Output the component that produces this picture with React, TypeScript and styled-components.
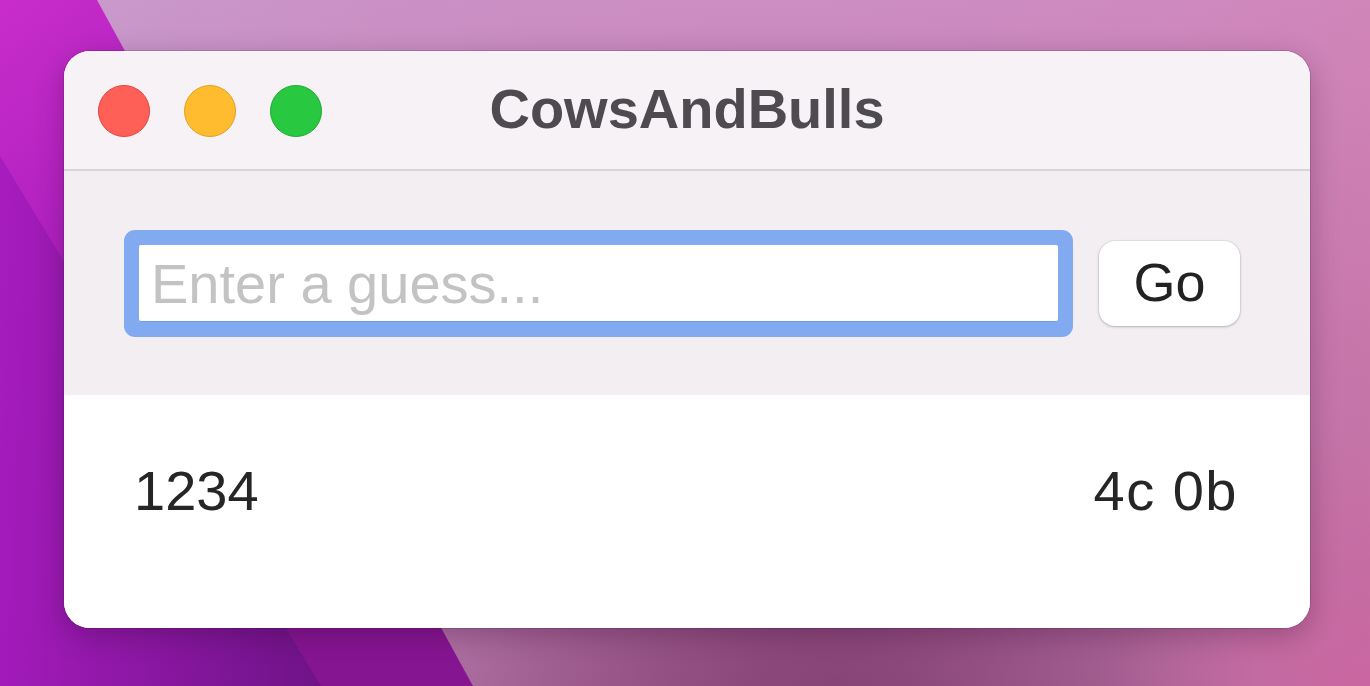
import React from "react";
import styled, { createGlobalStyle } from "styled-components";

const GlobalStyle = createGlobalStyle`
  html, body {
    margin: 0;
    padding: 0;
    width: 100%;
    height: 100%;
    overflow: hidden;
    font-family: "Liberation Sans", Arial, sans-serif;
  }
  #root { width: 100%; height: 100%; }
`;

const Desktop = styled.div`
  width: 100vw;
  height: 100vh;
  display: grid;
  grid-template: 1fr / 1fr;
`;

const Wallpaper = styled.svg`
  grid-area: 1 / 1;
  width: 100%;
  height: 100%;
  display: block;
`;

const WindowLayer = styled.div`
  grid-area: 1 / 1;
  padding: 51px 60px 58px 64px;
  display: flex;
`;

const Window = styled.div`
  flex: 1;
  display: flex;
  flex-direction: column;
  border-radius: 26px;
  overflow: hidden;
  background: #ffffff;
  box-shadow: 0 0 0 1px rgba(60, 20, 60, 0.18), 0 8px 28px rgba(40, 0, 40, 0.28);
`;

const TitleBar = styled.div`
  height: 120px;
  flex: none;
  display: grid;
  grid-template-columns: 1fr auto 1fr;
  align-items: center;
  background: #f6f2f6;
  border-bottom: 2px solid #d9d5d9;
  padding-bottom: 2px;
  box-sizing: border-box;
`;

const Lights = styled.div`
  display: flex;
  gap: 34px;
  padding-left: 34px;
  padding-top: 3px;
`;

const Light = styled.span<{ $fill: string; $edge: string }>`
  width: 52px;
  height: 52px;
  border-radius: 50%;
  box-sizing: border-box;
  background: ${(p) => p.$fill};
  border: 1px solid ${(p) => p.$edge};
`;

const Title = styled.div`
  font-size: 56px;
  line-height: 64px;
  font-weight: 700;
  color: #4d4b4f;
`;

const Toolbar = styled.div`
  height: 224px;
  flex: none;
  display: flex;
  align-items: center;
  gap: 26px;
  padding: 0 70px 0 60px;
  background: #f2eef2;
`;

const FocusRing = styled.div`
  flex: 1;
  display: flex;
  padding: 15px;
  border-radius: 11px;
  background: #81aaf1;
`;

const GuessInput = styled.input`
  flex: 1;
  min-width: 0;
  height: 77px;
  box-sizing: border-box;
  border: none;
  outline: none;
  border-radius: 2px;
  background: #ffffff;
  box-shadow: inset 0 -1px 0 #6f9ae6;
  padding: 0 12px;
  font-family: "Liberation Sans", Arial, sans-serif;
  font-size: 56px;
  color: #222;
  &::placeholder {
    color: #c3c3c3;
    opacity: 1;
  }
`;

const GoButton = styled.button`
  width: 141px;
  height: 85px;
  flex: none;
  border: none;
  border-radius: 16px;
  background: #ffffff;
  box-shadow: 0 0 0 1px rgba(0, 0, 0, 0.05), 0 1px 3px rgba(0, 0, 0, 0.22);
  font-family: "Liberation Sans", Arial, sans-serif;
  font-size: 54px;
  line-height: 64px;
  color: #222222;
  padding: 0 0 2px;
  cursor: pointer;
`;

const Results = styled.div`
  flex: 1;
  background: #ffffff;
  padding: 64px 72px 0 70px;
`;

const ResultRow = styled.div`
  display: flex;
  justify-content: space-between;
  font-size: 56px;
  line-height: 64px;
  color: #262626;
`;

const Score = styled.span`
  letter-spacing: 1.5px;
`;

const guesses = [{ guess: "1234", score: "4c 0b" }];

export default function App() {
  return (
    <>
      <GlobalStyle />
      <Desktop>
        <Wallpaper viewBox="0 0 1370 686" preserveAspectRatio="none">
          <defs>
            <linearGradient id="base" x1="0" y1="0" x2="0" y2="1">
              <stop offset="0" stopColor="#cc8ec3" />
              <stop offset="0.5" stopColor="#b86ca2" />
              <stop offset="1" stopColor="#a05d8e" />
            </linearGradient>
            <linearGradient id="tint" x1="0" y1="0" x2="1" y2="0">
              <stop offset="0" stopColor="#c7a2d2" stopOpacity="0.7" />
              <stop offset="0.55" stopColor="#cb8cc3" stopOpacity="0.1" />
              <stop offset="1" stopColor="#d57fb2" stopOpacity="0.55" />
            </linearGradient>
            <radialGradient id="dark" cx="840" cy="720" r="420" gradientUnits="userSpaceOnUse">
              <stop offset="0" stopColor="#7e3b6e" stopOpacity="0.85" />
              <stop offset="1" stopColor="#7e3b6e" stopOpacity="0" />
            </radialGradient>
            <radialGradient id="pink" cx="1370" cy="686" r="260" gradientUnits="userSpaceOnUse">
              <stop offset="0" stopColor="#cc66a2" stopOpacity="0.9" />
              <stop offset="1" stopColor="#cc66a2" stopOpacity="0" />
            </radialGradient>
            <linearGradient id="mag" x1="0" y1="0" x2="0.5" y2="1">
              <stop offset="0" stopColor="#c82dca" />
              <stop offset="0.45" stopColor="#a81cbd" />
              <stop offset="1" stopColor="#861592" />
            </linearGradient>
            <linearGradient id="deep" gradientUnits="userSpaceOnUse" x1="0" y1="0" x2="320" y2="0">
              <stop offset="0" stopColor="#a51bbd" />
              <stop offset="1" stopColor="#6c1386" />
            </linearGradient>
          </defs>
          <rect x="0" y="0" width="1370" height="686" fill="url(#base)" />
          <rect x="0" y="0" width="1370" height="686" fill="url(#tint)" />
          <rect x="0" y="0" width="1370" height="686" fill="url(#dark)" />
          <rect x="0" y="0" width="1370" height="686" fill="url(#pink)" />
          <polygon points="0,0 97,0 473,686 0,686" fill="url(#mag)" />
          <polygon points="0,156 321,686 0,686" fill="url(#deep)" opacity="0.9" />
        </Wallpaper>
        <WindowLayer>
          <Window>
            <TitleBar>
              <Lights>
                <Light $fill="#fe5f57" $edge="#e2463f" />
                <Light $fill="#febc2e" $edge="#e1a125" />
                <Light $fill="#28c840" $edge="#1dab2f" />
              </Lights>
              <Title>CowsAndBulls</Title>
              <span />
            </TitleBar>
            <Toolbar>
              <FocusRing>
                <GuessInput placeholder="Enter a guess..." />
              </FocusRing>
              <GoButton>Go</GoButton>
            </Toolbar>
            <Results>
              {guesses.map((g) => (
                <ResultRow key={g.guess}>
                  <span>{g.guess}</span>
                  <Score>{g.score}</Score>
                </ResultRow>
              ))}
            </Results>
          </Window>
        </WindowLayer>
      </Desktop>
    </>
  );
}
